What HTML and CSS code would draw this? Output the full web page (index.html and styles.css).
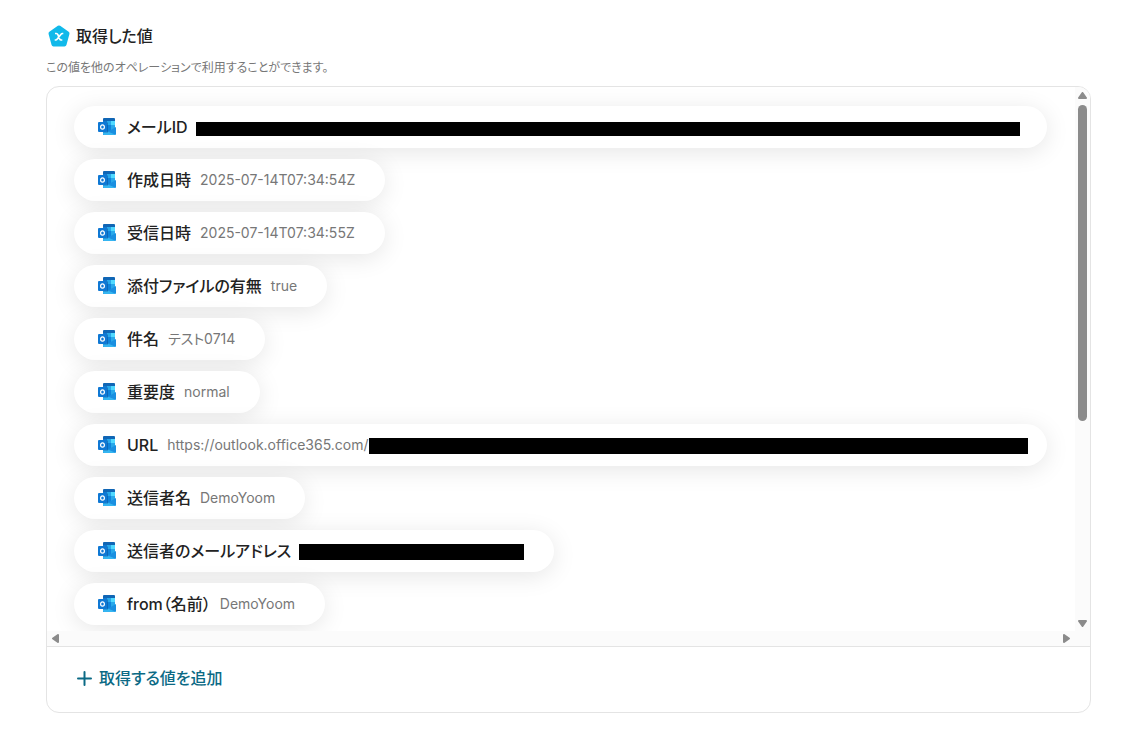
FILE: index.html
```html
<!DOCTYPE html>
<html lang="ja">
<head>
    <meta charset="UTF-8">
    <meta name="viewport" content="width=device-width, initial-scale=1.0">
    <title>取得した値</title>
    <link rel="stylesheet" href="styles.css">
</head>
<body>
    <svg class="sprite" aria-hidden="true">
        <symbol id="outlook" viewBox="0 0 18 18">
            <path d="M5 1a1 1 0 0 1 1-1h10a1 1 0 0 1 1 1v12H5z" fill="#1066b5"/>
            <path d="M5 3h4v9H5z" fill="#1279cf"/>
            <path d="M9 3h4v4H9z" fill="#28a8ea"/>
            <path d="M13 3h4v4h-4z" fill="#50d9ff"/>
            <path d="M9 7h4v6H9z" fill="#0f84dc"/>
            <path d="M13 7h4v5h-4z" fill="#28a8ea"/>
            <path d="M18 9v7a1 1 0 0 1-1 1H5v-4h6z" fill="#1a8fe0"/>
            <path d="M5 14h6l6.500 2.700-.5.300H6a1 1 0 0 1-1-1z" fill="#35b5f1"/>
            <path d="M9 4.500h1v10H5V14h4z" fill="#0a4c91" opacity=".5"/>
            <rect x="0" y="4" width="9" height="10" rx="1" fill="#0f78d4"/>
            <ellipse cx="4.500" cy="9" rx="1.900" ry="2.200" fill="none" stroke="#fff" stroke-width="1.200"/>
        </symbol>
    </svg>

    <h1 class="title">
        <svg class="title-icon" viewBox="0 0 22 22" aria-hidden="true">
            <path d="M11 2.500L19.500 8.500 16.500 19.500H5.500L2.500 8.500z" fill="#11b9ea" stroke="#11b9ea" stroke-width="4" stroke-linejoin="round"/>
            <path d="M7 8.500h1.300c.9 0 1.300.5 1.700 1.400l1.500 3.700c.4.900.8 1.400 1.600 1.400h1.200M15.300 8.500h-.8c-.8 0-1.300.5-1.900 1.200l-3.100 4c-.6.800-1.100 1.300-1.900 1.300h-.9" fill="none" stroke="#fff" stroke-width="1.700"/>
        </svg>
        取得した値
    </h1>
    <p class="description">この値を他のオペレーションで利用することができます。</p>

    <div class="panel">
        <div class="scroll-area">
            <ul class="values">
                <li class="value wide">
                    <svg class="app-icon"><use href="#outlook"/></svg>
                    <span class="name">メールID</span>
                    <span class="mask mask-id"></span>
                </li>
                <li class="value">
                    <svg class="app-icon"><use href="#outlook"/></svg>
                    <span class="name">作成日時</span>
                    <span class="data">2025-07-14T07:34:54Z</span>
                </li>
                <li class="value">
                    <svg class="app-icon"><use href="#outlook"/></svg>
                    <span class="name">受信日時</span>
                    <span class="data">2025-07-14T07:34:55Z</span>
                </li>
                <li class="value">
                    <svg class="app-icon"><use href="#outlook"/></svg>
                    <span class="name">添付ファイルの有無</span>
                    <span class="data">true</span>
                </li>
                <li class="value">
                    <svg class="app-icon"><use href="#outlook"/></svg>
                    <span class="name">件名</span>
                    <span class="data">テスト0714</span>
                </li>
                <li class="value">
                    <svg class="app-icon"><use href="#outlook"/></svg>
                    <span class="name">重要度</span>
                    <span class="data">normal</span>
                </li>
                <li class="value wide">
                    <svg class="app-icon"><use href="#outlook"/></svg>
                    <span class="name">URL</span>
                    <span class="data">https://outlook.office365.com/</span>
                    <span class="mask mask-url"></span>
                </li>
                <li class="value">
                    <svg class="app-icon"><use href="#outlook"/></svg>
                    <span class="name">送信者名</span>
                    <span class="data">DemoYoom</span>
                </li>
                <li class="value">
                    <svg class="app-icon"><use href="#outlook"/></svg>
                    <span class="name">送信者のメールアドレス</span>
                    <span class="mask mask-mail"></span>
                </li>
                <li class="value">
                    <svg class="app-icon"><use href="#outlook"/></svg>
                    <span class="name">from（名前）</span>
                    <span class="data">DemoYoom</span>
                </li>
            </ul>
            <div class="bar bar-y">
                <svg class="arrow" viewBox="0 0 9 7"><path d="M4.500 1L8 6H1z"/></svg>
                <div class="track"><div class="thumb"></div></div>
                <svg class="arrow" viewBox="0 0 9 7"><path d="M4.500 6L8 1H1z"/></svg>
            </div>
            <div class="bar bar-x">
                <svg class="arrow side" viewBox="0 0 7 9"><path d="M1 4.500L6 1v7z"/></svg>
                <svg class="arrow side" viewBox="0 0 7 9"><path d="M6 4.500L1 1v7z"/></svg>
            </div>
        </div>
        <div class="footer">
            <button class="add" type="button">
                <svg class="plus" viewBox="0 0 15 15" aria-hidden="true"><path d="M7.500 1v13M1 7.500h13"/></svg>
                取得する値を追加
            </button>
        </div>
    </div>
</body>
</html>
```
FILE: styles.css
```css
* {
    box-sizing: border-box;
}
body {
    margin: 0;
    padding: 24px 33px 30px 46px;
    background-color: #fff;
    color: #222;
    font-family: Inter, "Noto Sans CJK JP", sans-serif;
    font-feature-settings: "palt";
}
.sprite {
    position: absolute;
    width: 0;
    height: 0;
}
.title {
    display: flex;
    align-items: center;
    gap: 6px;
    margin: 0 0 0 2px;
    font-size: 16px;
    font-weight: 500;
    line-height: 24px;
}
.title-icon {
    width: 22px;
    height: 22px;
}
.description {
    margin: 10px 0 8px;
    color: #777;
    font-size: 12px;
    line-height: 20px;
}
.panel {
    border: 1px solid #e4e4e4;
    border-radius: 13px;
    overflow: hidden;
}
.scroll-area {
    display: grid;
    grid-template-columns: 1fr 15px;
    grid-template-rows: auto 15px;
}
.values {
    display: flex;
    flex-direction: column;
    align-items: flex-start;
    gap: 11px;
    margin: 0;
    padding: 19px 28px 6px 27px;
    list-style: none;
    overflow: hidden;
}
.value {
    display: flex;
    align-items: center;
    height: 42px;
    padding: 0 30px 0 24px;
    border-radius: 21px;
    background-color: #fff;
    box-shadow: 0 4px 24px rgba(0, 0, 0, 0.1);
}
.wide {
    align-self: stretch;
    padding-right: 19px;
}
.app-icon {
    width: 18px;
    height: 18px;
    flex-shrink: 0;
}
.name {
    margin-left: 11px;
    font-size: 16px;
    font-weight: 500;
    line-height: 24px;
    white-space: nowrap;
}
.data {
    margin-left: 9px;
    color: #777;
    font-size: 14px;
    line-height: 20px;
}
.mask {
    height: 16px;
    margin: 2px 0 0 8px;
    background-color: #000;
}
.mask-id {
    flex: 1;
    height: 14px;
    margin-top: 4px;
    margin-right: 8px;
}
.mask-url {
    flex: 1;
    margin-left: 0;
}
.mask-mail {
    width: 225px;
}
.bar {
    display: flex;
    align-items: center;
    justify-content: space-between;
    background-color: #fbfbfb;
}
.bar-y {
    flex-direction: column;
    padding: 5px 0 4px;
}
.bar-x {
    grid-column: 1 / 3;
    padding: 0 20px 0 5px;
}
.arrow {
    width: 9px;
    height: 7px;
    fill: #8b8b8b;
    stroke: #8b8b8b;
    stroke-width: 2;
    stroke-linejoin: round;
}
.side {
    width: 7px;
    height: 9px;
}
.track {
    flex: 1;
    width: 9px;
    padding: 6px 0;
}
.thumb {
    height: 62%;
    border-radius: 5px;
    background-color: #8b8b8b;
}
.footer {
    padding: 19px 30px 21px;
    border-top: 1px solid #e4e4e4;
}
.add {
    display: flex;
    align-items: center;
    gap: 7px;
    padding: 0;
    border: none;
    background: none;
    color: #0b6a85;
    font: inherit;
    font-size: 16px;
    font-weight: 500;
    line-height: 25px;
    cursor: pointer;
}
.plus {
    width: 15px;
    height: 15px;
    stroke: currentColor;
    stroke-width: 2;
    stroke-linecap: round;
}
```
